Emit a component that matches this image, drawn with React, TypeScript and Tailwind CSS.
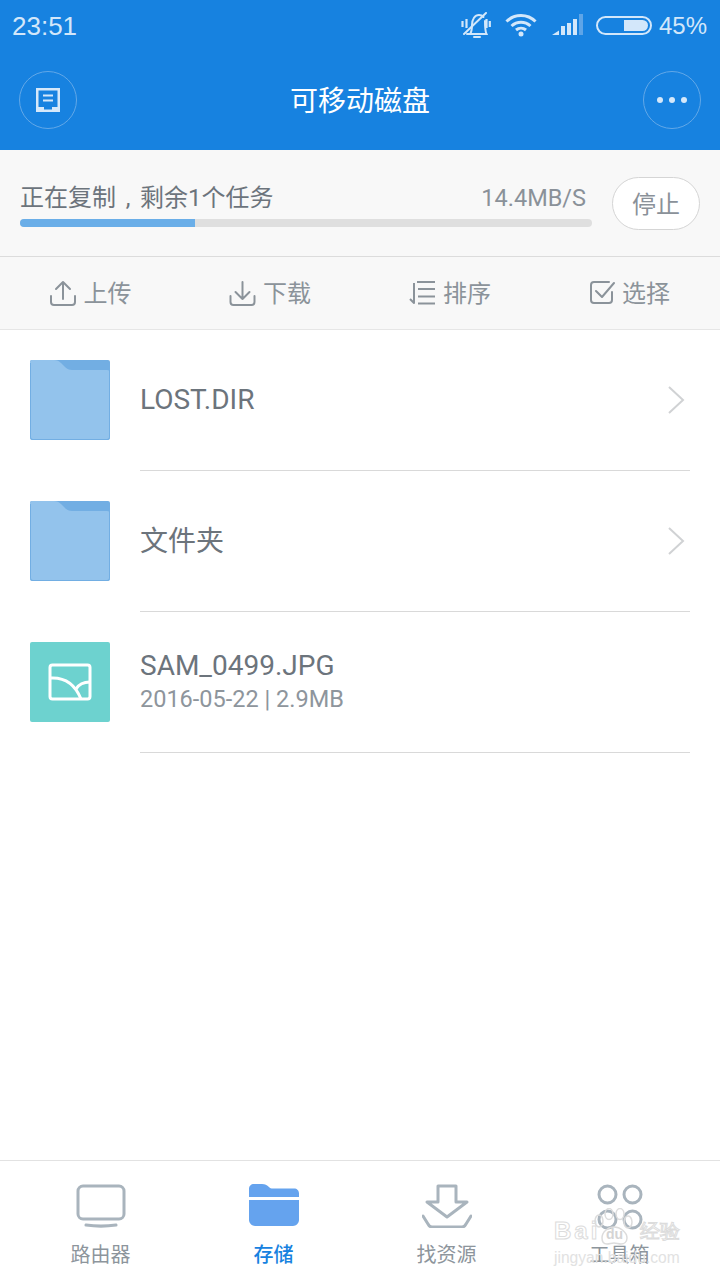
const font = "font-['Roboto','Noto_Sans_CJK_SC',sans-serif]";

const MuteIcon = () => (
  <svg width="30" height="26" viewBox="0 0 30 26" fill="none" stroke="#d3e7fa" strokeWidth="2">
    <path d="M9 22c1.500-2 2-4 2-9 0-6 3-10 7-10 2 0 3.500.8 4.500 2M24 9c0 6 0 10 1.500 13H6" strokeLinecap="round" />
    <path d="M3 22 25 1" strokeLinecap="round" />
    <path d="M13 25h6" strokeLinecap="round" />
    <path d="M1.500 9v6M5.500 7v9M25.500 7v9M28.800 9v6" strokeWidth="2.200" />
  </svg>
);

const WifiIcon = () => (
  <svg width="32" height="24" viewBox="0 0 32 24" fill="none" stroke="#d3e7fa" strokeWidth="3">
    <path d="M1.500 8.500c8-8 21-8 29 0" />
    <path d="M6.500 13c5.500-5 13.500-5 19 0" />
    <path d="M11 17c3-2.500 7-2.500 10 0" />
    <circle cx="16" cy="21" r="2.500" fill="#d3e7fa" stroke="none" />
  </svg>
);

const SignalIcon = () => (
  <svg width="32" height="22" viewBox="0 0 32 22" fill="#d3e7fa">
    <path d="M0 21 7 16.500V21z" />
    <rect x="9" y="12" width="4" height="9" />
    <rect x="15" y="9" width="4" height="12" />
    <rect x="21" y="5" width="4" height="16" />
    <rect x="27" y="0" width="4" height="21" fill="#5ea5e8" />
  </svg>
);

const BatteryIcon = () => (
  <div className="flex h-[19px] w-[56px] items-center justify-end rounded-full border-2 border-[#d3e7fa] p-[2px]">
    <div className="h-[11px] w-[24px] rounded-r-full bg-[#d3e7fa]" />
  </div>
);

const NoteIcon = () => (
  <svg width="24" height="24" viewBox="0 0 24 24" fill="none">
    <path
      fillRule="evenodd"
      d="M0 0h24v24H0zM2.500 2.500V19H8v2.500h8V19h5.500V2.500z"
      fill="#d5e8fa"
    />
    <path d="M7 7.500h10M7 12.500h10" stroke="#d5e8fa" strokeWidth="2.200" />
  </svg>
);

const UploadIcon = () => (
  <svg width="28" height="26" viewBox="0 0 28 26" fill="none" stroke="#8b939a" strokeWidth="2" strokeLinecap="round" strokeLinejoin="round">
    <path d="M14 19V2M7 9l7-7 7 7" />
    <path d="M2 16v6c0 2 1 3 3 3h18c2 0 3-1 3-3v-6" />
  </svg>
);

const DownloadIcon = () => (
  <svg width="27" height="26" viewBox="0 0 27 26" fill="none" stroke="#8b939a" strokeWidth="2" strokeLinecap="round" strokeLinejoin="round">
    <path d="M13.500 2v17M6.500 12l7 7 7-7" />
    <path d="M1.500 16v6c0 2 1 3 3 3h18c2 0 3-1 3-3v-6" />
  </svg>
);

const SortIcon = () => (
  <svg width="27" height="24" viewBox="0 0 27 24" fill="none" stroke="#8b939a" strokeWidth="2">
    <path d="M8 1h18M9 8h17M9 15.500h17M9 22.500h17" />
    <path d="M5 2v20L1 18" strokeLinejoin="round" />
  </svg>
);

const CheckIcon = () => (
  <svg width="25" height="24" viewBox="0 0 25 24" fill="none" stroke="#8b939a" strokeWidth="2" strokeLinecap="round" strokeLinejoin="round">
    <path d="M22 11v8c0 2-1 3-3 3H4c-2 0-3-1-3-3V4c0-2 1-3 3-3h15" />
    <path d="M6 10l6 6L24 2" />
  </svg>
);

const FolderIcon = () => (
  <svg width="80" height="80" viewBox="0 0 80 80">
    <rect x="0" y="0" width="80" height="80" rx="2" fill="#72aee3" />
    <path d="M0 2a2 2 0 0 1 2-2h22c3 0 5 1 7 3l4 4c2 2 4 3 7 3h35a3 3 0 0 1 3 3v64a2 2 0 0 1-2 2H2a2 2 0 0 1-2-2z" fill="#93c3ec" />
    <path d="M.5 3v74a2.500 2.500 0 0 0 2.500 2.500h74a2.500 2.500 0 0 0 2.500-2.500V10" fill="none" stroke="#72aee3" />
  </svg>
);

const ImageFileIcon = () => (
  <div className="flex h-20 w-20 items-center justify-center rounded-[2px] bg-[#6dd2cf]">
    <svg width="44" height="38" viewBox="0 0 44 38" fill="none" stroke="#ffffff" strokeWidth="3">
      <rect x="2" y="2" width="40" height="34" rx="2.500" />
      <path d="M2 15c14-1 25 6 31 21" />
      <path d="M28 26c3-5 8-7 14-7" />
    </svg>
  </div>
);

const Chevron = () => (
  <svg width="18" height="28" viewBox="0 0 18 28" fill="none" stroke="#d0d2d4" strokeWidth="2">
    <path d="M2 1l14 13L2 27" />
  </svg>
);

const RouterIcon = () => (
  <svg width="50" height="44" viewBox="0 0 50 44" fill="none" stroke="#a9b4bd" strokeWidth="3" strokeLinecap="round">
    <rect x="2" y="2" width="46" height="33" rx="5" />
    <path d="M10 41c10 1.500 20 1.500 30 0" />
  </svg>
);

const StorageIcon = () => (
  <svg width="50" height="42" viewBox="0 0 50 42">
    <path d="M0 13V5c0-3 2-5 5-5h8c3 0 5 1 7 3 1 1 2 1.500 4 1.500h21c3 0 5 2 5 5V13z" fill="#65a3ee" />
    <path d="M0 16h50v20c0 3-3 6-6 6H6c-3 0-6-3-6-6z" fill="#65a3ee" />
  </svg>
);

const FindIcon = () => (
  <svg width="50" height="44" viewBox="0 0 50 44" fill="none" stroke="#a9b4bd" strokeWidth="3" strokeLinecap="round" strokeLinejoin="round">
    <path d="M16 18V2h18v16h11L25 33 5 18z" />
    <path d="M1 32l5 8c1 2 2 3 4 3h30c2 0 3-1 4-3l5-8" />
  </svg>
);

const ToolsIcon = () => (
  <svg width="46" height="46" viewBox="0 0 46 46" fill="none" stroke="#a9b4bd" strokeWidth="3">
    <circle cx="10.500" cy="10.500" r="8.500" />
    <circle cx="35.500" cy="10.500" r="8.500" />
    <circle cx="10.500" cy="35.500" r="8.500" />
    <circle cx="35.500" cy="35.500" r="8.500" />
  </svg>
);

const tools = [
  { icon: <UploadIcon />, label: "上传" },
  { icon: <DownloadIcon />, label: "下载" },
  { icon: <SortIcon />, label: "排序" },
  { icon: <CheckIcon />, label: "选择" },
];

const Row = ({ icon, name, sub, arrow, cjk }: { icon: React.ReactNode; name: string; sub?: string; arrow?: boolean; cjk?: boolean }) => (
  <div className="flex h-[141px] pl-[30px] pr-[30px]">
    <div className="pt-[30px]">{icon}</div>
    <div className="ml-[30px] flex flex-1 items-center justify-between border-b border-[#d9d9d9] pb-px">
      <div className={cjk ? "pt-[2px]" : ""}>
        <div className="text-[28px] leading-[34px] text-[#6c747c]">{name}</div>
        {sub && <div className="text-[23.500px] leading-[32px] text-[#8e959c]">{sub}</div>}
      </div>
      {arrow && <div className="mr-[5px]"><Chevron /></div>}
    </div>
  </div>
);

const Tab = ({ icon, label, active }: { icon: React.ReactNode; label: string; active?: boolean }) => (
  <div className="flex flex-col items-center">
    <div className="flex h-[46px] items-start">{icon}</div>
    <div className={`mt-[13px] text-[20px] leading-[24px] ${active ? "font-medium text-[#1782e0]" : "text-[#8d959c]"}`}>
      {label}
    </div>
  </div>
);

export default function App() {
  return (
    <div className={`${font} relative flex h-[1280px] w-[720px] flex-col overflow-hidden bg-white`}>
      <header className="h-[150px] bg-[#1782e0]">
        <div className="flex h-[50px] items-center justify-between pl-[12px] pr-[13px] font-['Liberation_Sans',sans-serif] text-[#d3e7fa]">
          <span className="pt-[2px] text-[26px]">23:51</span>
          <div className="flex items-center">
            <MuteIcon />
            <div className="ml-[14px]"><WifiIcon /></div>
            <div className="ml-[15px]"><SignalIcon /></div>
            <div className="ml-[12px]"><BatteryIcon /></div>
            <span className="ml-[7px] pt-[2px] text-[24px]">45%</span>
          </div>
        </div>
        <div className="flex h-[100px] items-center justify-between pl-[19px] pr-[19px]">
          <button className="flex h-[58px] w-[58px] items-center justify-center rounded-full border border-[#62a8e8]">
            <NoteIcon />
          </button>
          <h1 className="pt-[3px] text-[28px] text-white">可移动磁盘</h1>
          <button className="flex h-[58px] w-[58px] items-center justify-center gap-[6px] rounded-full border border-[#62a8e8]">
            <span className="h-[6px] w-[6px] rounded-full bg-[#d5e8fa]" />
            <span className="h-[6px] w-[6px] rounded-full bg-[#d5e8fa]" />
            <span className="h-[6px] w-[6px] rounded-full bg-[#d5e8fa]" />
          </button>
        </div>
      </header>

      <section className="flex h-[107px] items-start border-b border-[#dcdcdc] bg-[#f8f8f8] pl-[20px] pr-[20px] pt-[27px]">
        <div className="w-[572px]">
          <div className="flex h-[40px] items-center justify-between pr-[6px] pt-[2px] text-[24px] leading-[32px]">
            <span className="text-[#6c747c]">
              正在复制<span className="inline-block w-[24px] text-center">,</span>剩余1个任务
            </span>
            <span className="text-[23.500px] text-[#8a9199]">14.4MB/S</span>
          </div>
          <div className="mt-[2px] h-[8px] overflow-hidden rounded-full bg-[#dfdfdf]">
            <div className="h-full w-[175px] bg-[#6aaee8]" />
          </div>
        </div>
        <button className="ml-[20px] h-[53px] w-[88px] rounded-full border border-[#d5d5d5] bg-white pt-[2px] text-[24px] text-[#8a9199]">
          停止
        </button>
      </section>

      <nav className="grid h-[73px] grid-cols-4 border-b border-[#e6e6e6] bg-[#f8f8f8]">
        {tools.map((t) => (
          <div key={t.label} className="flex items-center justify-center gap-[7px] text-[24px] text-[#8b939a]">
            {t.icon}
            <span className="pt-[2px]">{t.label}</span>
          </div>
        ))}
      </nav>

      <main className="flex-1">
        <Row icon={<FolderIcon />} name="LOST.DIR" arrow />
        <Row icon={<FolderIcon />} name="文件夹" arrow cjk />
        <Row icon={<ImageFileIcon />} name="SAM_0499.JPG" sub="2016-05-22 | 2.9MB" />
      </main>

      <footer className="grid h-[120px] grid-cols-4 border-t border-[#e2e2e2] pl-[14px] pr-[14px] pt-[23px]">
        <Tab icon={<RouterIcon />} label="路由器" />
        <Tab icon={<StorageIcon />} label="存储" active />
        <Tab icon={<FindIcon />} label="找资源" />
        <Tab icon={<ToolsIcon />} label="工具箱" />
      </footer>

      {/* baidu watermark */}
      <div className="absolute left-[554px] top-[1208px] h-[58px] w-[127px] font-['Liberation_Sans',sans-serif]">
        <svg className="absolute left-[38px] top-0" width="44" height="38" viewBox="0 0 44 38" fill="none" stroke="#dcdcdc" strokeWidth="1.500">
          <ellipse cx="7" cy="13" rx="4" ry="6" />
          <ellipse cx="17" cy="6" rx="4" ry="5.500" />
          <ellipse cx="28" cy="6" rx="4" ry="5.500" />
          <ellipse cx="36" cy="14" rx="4" ry="6" />
          <path d="M10 30c0-6 6-11 12-11s13 5 13 11c0 4-3 6-6 6-3 0-4-1-7-1s-4 1-7 1c-3 0-5-2-5-6z" />
        </svg>
        <span className="absolute left-0 top-[10px] text-[24px] font-bold leading-[26px] tracking-[3px] text-transparent [-webkit-text-stroke:1px_#dcdcdc]">
          Bai
        </span>
        <span className="absolute left-[52px] top-[17px] text-[14px] font-bold leading-[18px] text-[#d4d4d4]">du</span>
        <span className="absolute left-[86px] top-[11px] text-[20px] leading-[24px] text-transparent [-webkit-text-stroke:1px_#dcdcdc]">
          经验
        </span>
        <span className="absolute left-0 top-[40px] whitespace-nowrap text-[15.600px] leading-[20px] text-[#e2e2e2]">
          jingyan.baidu.com
        </span>
      </div>
    </div>
  );
}
